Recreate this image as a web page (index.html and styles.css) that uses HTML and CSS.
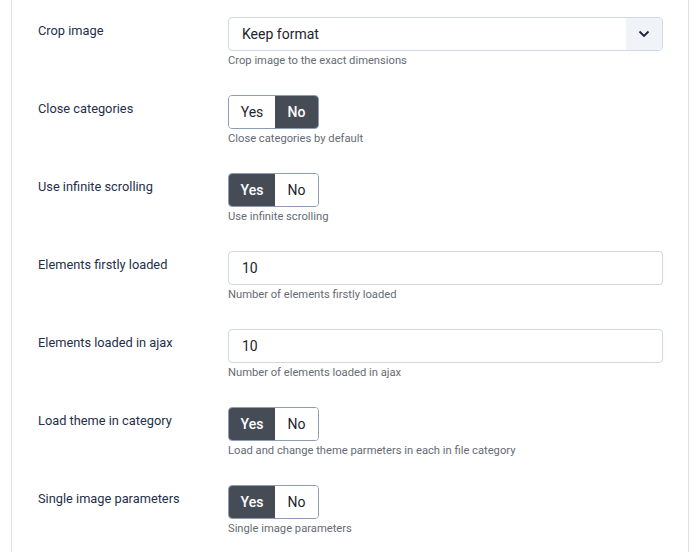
FILE: index.html
```html
<!DOCTYPE html>
<html lang="en">
  <head>
    <meta charset="UTF-8" />
    <title>Category options</title>
    <link rel="stylesheet" href="styles.css">
  </head>
  <body>
    <div class="panel">
      <div class="row">
        <label class="row-label">Crop image</label>
        <div class="row-field">
          <div class="select">
            <span class="select-value">Keep format</span>
            <span class="select-arrow">
              <svg width="12" height="8" viewBox="0 0 12 8"><path d="M1.5 1.5 L6 6 L10.5 1.5" fill="none" stroke="#1d2430" stroke-width="1.8"/></svg>
            </span>
          </div>
          <div class="help">Crop image to the exact dimensions</div>
        </div>
      </div>

      <div class="row">
        <label class="row-label">Close categories</label>
        <div class="row-field">
          <div class="switcher">
            <span class="opt yes">Yes</span>
            <span class="opt no active">No</span>
          </div>
          <div class="help">Close categories by default</div>
        </div>
      </div>

      <div class="row">
        <label class="row-label">Use infinite scrolling</label>
        <div class="row-field">
          <div class="switcher">
            <span class="opt yes active">Yes</span>
            <span class="opt no">No</span>
          </div>
          <div class="help">Use infinite scrolling</div>
        </div>
      </div>

      <div class="row">
        <label class="row-label">Elements firstly loaded</label>
        <div class="row-field">
          <input class="text-input" type="text" value="10" />
          <div class="help">Number of elements firstly loaded</div>
        </div>
      </div>

      <div class="row">
        <label class="row-label">Elements loaded in ajax</label>
        <div class="row-field">
          <input class="text-input" type="text" value="10" />
          <div class="help">Number of elements loaded in ajax</div>
        </div>
      </div>

      <div class="row">
        <label class="row-label">Load theme in category</label>
        <div class="row-field">
          <div class="switcher">
            <span class="opt yes active">Yes</span>
            <span class="opt no">No</span>
          </div>
          <div class="help">Load and change theme parmeters in each in file category</div>
        </div>
      </div>

      <div class="row">
        <label class="row-label">Single image parameters</label>
        <div class="row-field">
          <div class="switcher">
            <span class="opt yes active">Yes</span>
            <span class="opt no">No</span>
          </div>
          <div class="help">Single image parameters</div>
        </div>
      </div>
    </div>
  </body>
</html>
```

FILE: styles.css
```css
body {
  margin: 0;
  font-family: Roboto, "Liberation Sans", Arial, sans-serif;
  background-color: #fff;
}
.panel {
  margin: 0 11px;
  min-height: 552px;
  box-sizing: border-box;
  padding: 17px 25px 0 26px;
  border-left: 1px solid #dbe1ea;
  border-right: 1px solid #dbe1ea;
}
.row {
  display: grid;
  grid-template-columns: 190px 1fr;
  height: 78px;
}
.row-label {
  padding-top: 6px;
  font-size: 12.8px;
  color: #1f2f4a;
}
.select {
  display: flex;
  height: 34px;
  box-sizing: border-box;
  border: 1px solid #cfd8e4;
  border-radius: 4px;
  overflow: hidden;
}
.select-value {
  flex: 1;
  padding-left: 13px;
  line-height: 32px;
  font-size: 14px;
  color: #1d2430;
}
.select-arrow {
  width: 36px;
  display: flex;
  align-items: center;
  justify-content: center;
  background-color: #f0f4f9;
}
.text-input {
  display: block;
  width: 100%;
  height: 34px;
  box-sizing: border-box;
  padding: 0 13px;
  border: 1px solid #cfd8e4;
  border-radius: 4px;
  font-family: inherit;
  font-size: 14px;
  color: #1d2430;
}
.switcher {
  display: inline-flex;
  height: 34px;
  box-sizing: border-box;
  border: 1px solid #8d9bb4;
  border-radius: 4px;
  overflow: hidden;
}
.opt {
  display: flex;
  align-items: center;
  justify-content: center;
  font-size: 14px;
  color: #1d2430;
  background-color: #fff;
}
.opt.yes {
  width: 46px;
}
.opt.no {
  width: 43px;
}
.opt.active {
  background-color: #464c55;
  color: #fff;
  font-weight: 500;
}
.help {
  margin-top: 3px;
  font-size: 11.2px;
  color: #666b73;
}
```
